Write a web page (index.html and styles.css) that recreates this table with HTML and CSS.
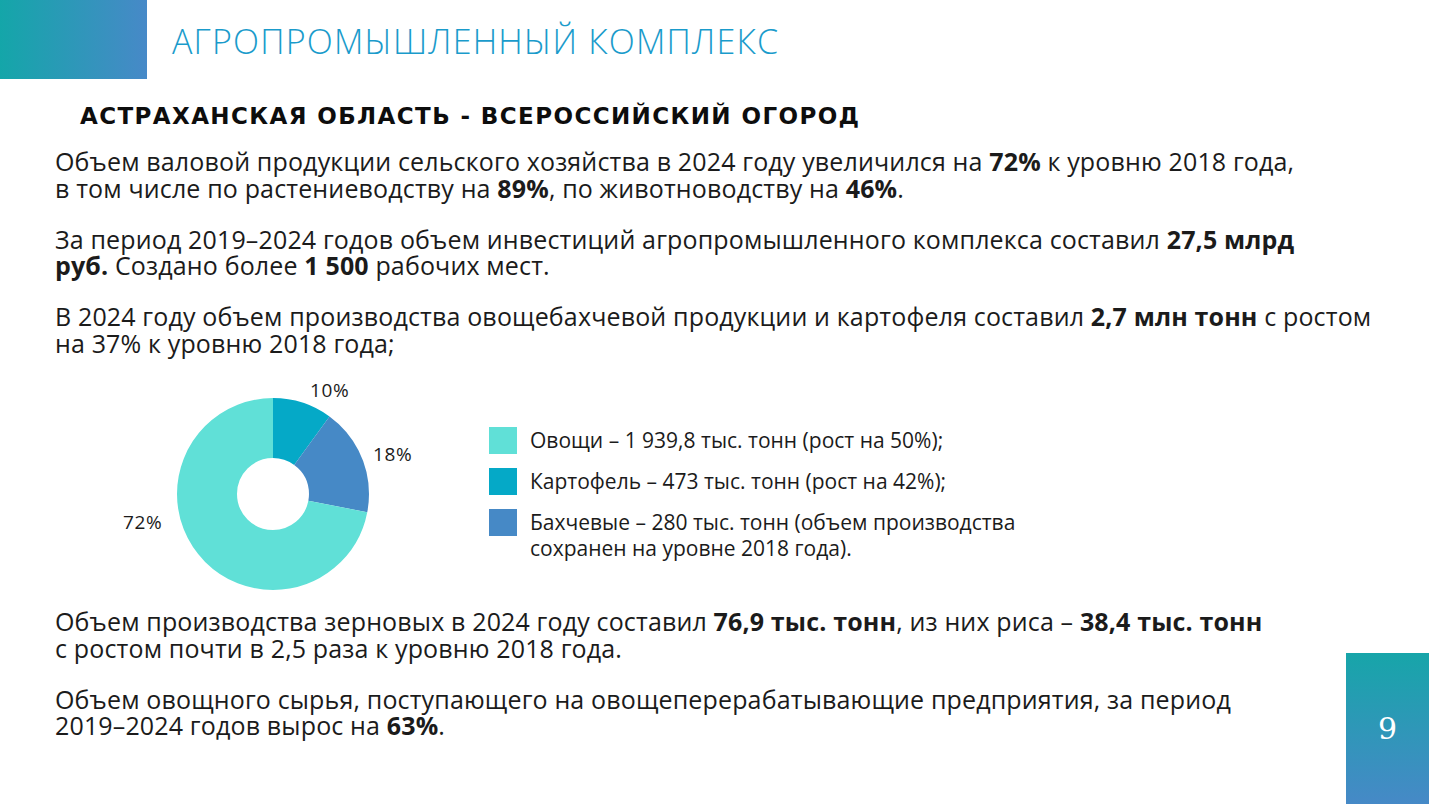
FILE: index.html
```html
<!DOCTYPE html>
<html lang="ru">
<head>
<meta charset="utf-8">
<title>Агропромышленный комплекс</title>
<link rel="stylesheet" href="styles.css">
</head>
<body>
<div class="slide">
  <header class="header">
    <div class="header-block"></div>
    <h1 class="title">АГРОПРОМЫШЛЕННЫЙ КОМПЛЕКС</h1>
  </header>
  <main class="content">
    <h2 class="subtitle">АСТРАХАНСКАЯ ОБЛАСТЬ - ВСЕРОССИЙСКИЙ ОГОРОД</h2>
    <p class="para">Объем валовой продукции сельского хозяйства в 2024 году увеличился на <b>72%</b> к уровню 2018 года,<br>в том числе по растениеводству на <b>89%</b>, по животноводству на <b>46%</b>.</p>
    <p class="para">За период 2019–2024 годов объем инвестиций агропромышленного комплекса составил <b>27,5 млрд<br>руб.</b> Создано более <b>1 500</b> рабочих мест.</p>
    <p class="para">В 2024 году объем производства овощебахчевой продукции и картофеля составил <b>2,7 млн тонн</b> с ростом<br>на 37% к уровню 2018 года;</p>
    <section class="chart-row">
      <svg class="donut" width="320" height="230" viewBox="0 0 320 230">
        <g transform="rotate(-90 162 119)">
          <circle cx="162" cy="119" r="66" fill="none" stroke="#05a9c7" stroke-width="60" stroke-dasharray="41.47 373.22" stroke-dashoffset="0"/>
          <circle cx="162" cy="119" r="66" fill="none" stroke="#4689c6" stroke-width="60" stroke-dasharray="74.64 340.05" stroke-dashoffset="-41.47"/>
          <circle cx="162" cy="119" r="66" fill="none" stroke="#60e0d7" stroke-width="60" stroke-dasharray="298.58 116.11" stroke-dashoffset="-116.11"/>
        </g>
        <text class="pct" x="199" y="22">10%</text>
        <text class="pct" x="262" y="86">18%</text>
        <text class="pct" x="12" y="154">72%</text>
      </svg>
      <ul class="legend">
        <li class="legend-item"><span class="swatch sw-veg"></span><span>Овощи – 1 939,8 тыс. тонн (рост на 50%);</span></li>
        <li class="legend-item"><span class="swatch sw-pot"></span><span>Картофель – 473 тыс. тонн (рост на 42%);</span></li>
        <li class="legend-item"><span class="swatch sw-mel"></span><span>Бахчевые – 280 тыс. тонн (объем производства<br>сохранен на уровне 2018 года).</span></li>
      </ul>
    </section>
    <p class="para">Объем производства зерновых в 2024 году составил <b>76,9 тыс. тонн</b>, из них риса – <b>38,4 тыс. тонн</b><br>с ростом почти в 2,5 раза к уровню 2018 года.</p>
    <p class="para">Объем овощного сырья, поступающего на овощеперерабатывающие предприятия, за период<br>2019–2024 годов вырос на <b>63%</b>.</p>
  </main>
  <div class="page-num">9</div>
</div>
</body>
</html>
```

FILE: styles.css
```css
html, body {
  margin: 0;
  padding: 0;
  background: #ffffff;
}

.slide {
  position: relative;
  width: 1429px;
  height: 804px;
  overflow: hidden;
  background: #ffffff;
  font-family: "Open Sans", "Noto Sans", sans-serif;
  color: #1b1b1b;
}

.header {
  display: flex;
  align-items: flex-start;
  height: 79px;
}

.header-block {
  width: 147px;
  height: 79px;
  flex: none;
  background: linear-gradient(90deg, #14a6a9 0%, #4789c8 100%);
}

.title {
  margin: 20px 0 0 25px;
  font-family: "Open Sans", sans-serif;
  font-weight: 300;
  font-size: 34px;
  line-height: 42px;
  color: #1a9bcb;
  letter-spacing: 1.2px;
  white-space: nowrap;
}

.content {
  padding-left: 55px;
}

.subtitle {
  margin: 22px 0 0 25px;
  font-family: "DejaVu Sans", sans-serif;
  font-weight: 700;
  font-size: 23px;
  line-height: 30px;
  letter-spacing: 1.4px;
  color: #0d0d0d;
  white-space: nowrap;
}

.para {
  margin: 17px 0 0 0;
  font-size: 25px;
  line-height: 26.5px;
  letter-spacing: 0.15px;
  white-space: nowrap;
}

.para + .para {
  margin-top: 24.5px;
}

.para b {
  font-weight: 700;
}

.chart-row {
  display: flex;
  align-items: flex-start;
  margin-top: 19px;
  height: 233px;
}

.donut {
  display: block;
  margin-left: 56px;
  flex: none;
}

.pct {
  font-family: "Open Sans", sans-serif;
  font-size: 19px;
  letter-spacing: 0.6px;
  fill: #1b1b1b;
}

.legend {
  list-style: none;
  margin: 52px 0 0 58px;
  padding: 0;
  display: flex;
  flex-direction: column;
  gap: 14px;
}

.legend-item {
  display: flex;
  align-items: flex-start;
  gap: 13px;
  font-size: 21px;
  line-height: 26px;
  white-space: nowrap;
}

.swatch {
  width: 28px;
  height: 27px;
  flex: none;
}

.sw-veg { background: #60e0d7; }
.sw-pot { background: #05a9c7; }
.sw-mel { background: #4689c6; }

.chart-row + .para {
  margin-top: 0;
}

.page-num {
  position: absolute;
  right: 0;
  bottom: 0;
  width: 83px;
  height: 151px;
  background: linear-gradient(180deg, #17a5a9 0%, #4689c7 100%);
  color: #ffffff;
  font-family: "DejaVu Serif", serif;
  font-size: 30px;
  display: flex;
  align-items: center;
  justify-content: center;
}
```
